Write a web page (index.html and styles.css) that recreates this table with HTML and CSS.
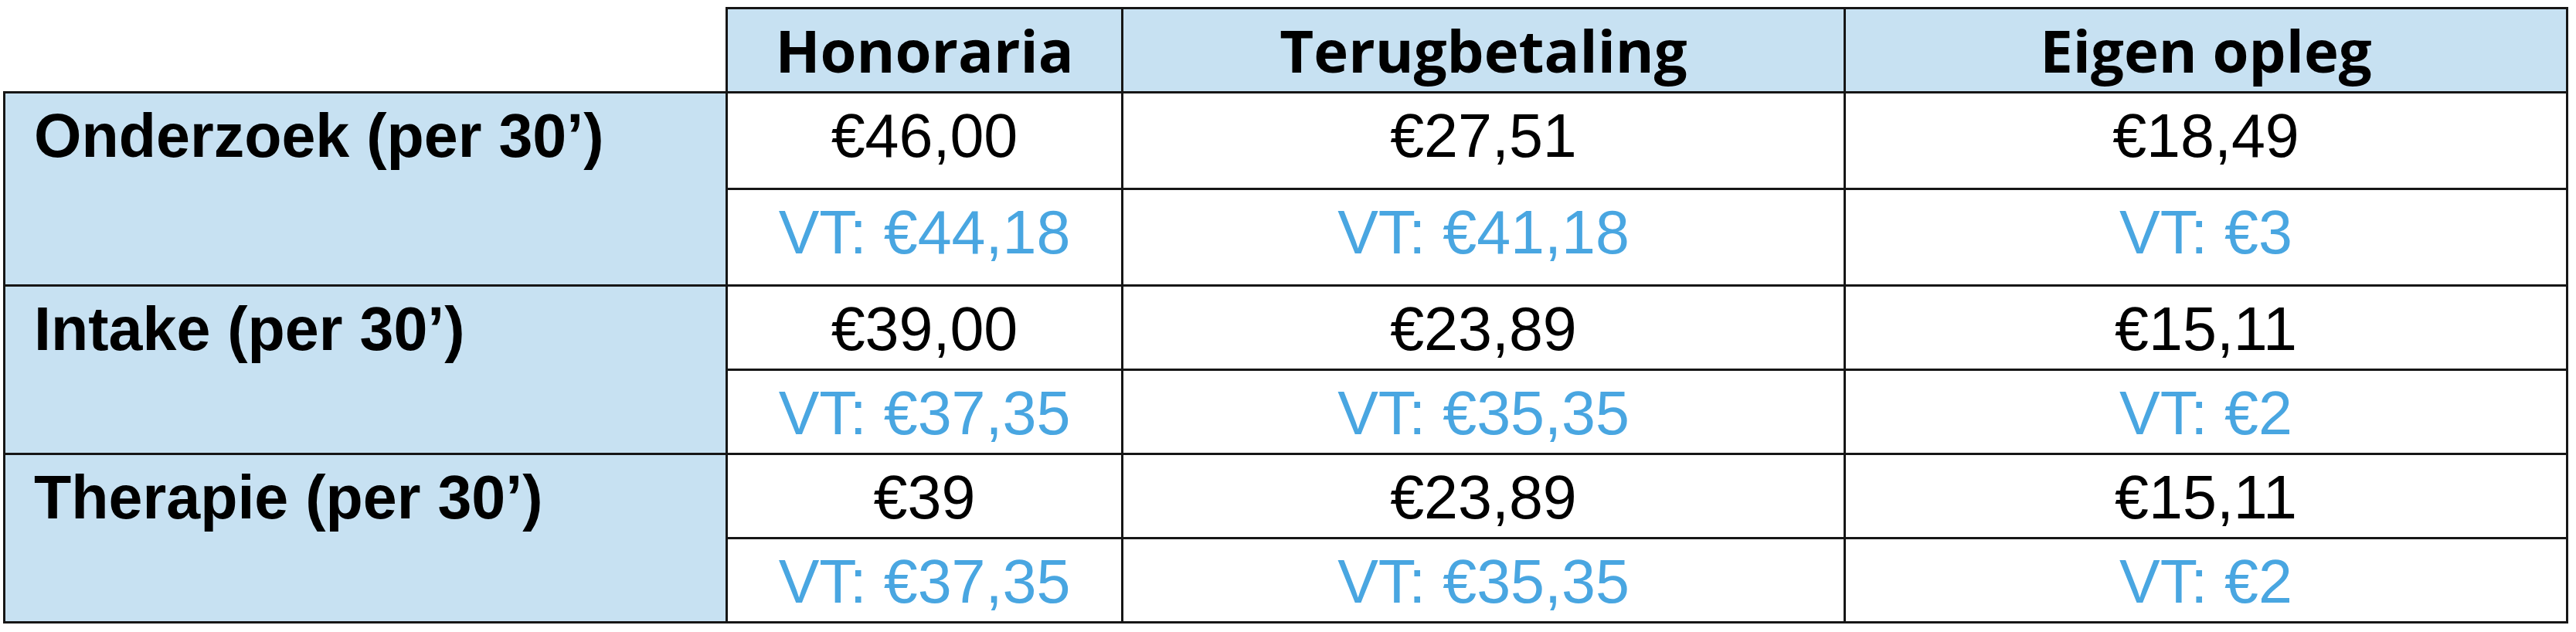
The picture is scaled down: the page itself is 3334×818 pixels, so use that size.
FILE: index.html
```html
<!DOCTYPE html>
<html lang="nl">
<head>
<meta charset="utf-8">
<title>Tarieven</title>
<link rel="stylesheet" href="styles.css">
</head>
<body>
<table class="tarief">
  <colgroup>
    <col class="c-label">
    <col class="c-hon">
    <col class="c-terug">
    <col class="c-eigen">
  </colgroup>
  <thead>
    <tr class="row-head">
      <td class="empty"></td>
      <th>Honoraria</th>
      <th>Terugbetaling</th>
      <th>Eigen opleg</th>
    </tr>
  </thead>
  <tbody>
    <tr class="row-tall">
      <th class="label" rowspan="2">Onderzoek (per 30’)</th>
      <td>€46,00</td>
      <td>€27,51</td>
      <td>€18,49</td>
    </tr>
    <tr class="row-tall">
      <td class="vt">VT: €44,18</td>
      <td class="vt">VT: €41,18</td>
      <td class="vt">VT: €3</td>
    </tr>
    <tr class="row">
      <th class="label" rowspan="2">Intake (per 30’)</th>
      <td>€39,00</td>
      <td>€23,89</td>
      <td>€15,11</td>
    </tr>
    <tr class="row">
      <td class="vt">VT: €37,35</td>
      <td class="vt">VT: €35,35</td>
      <td class="vt">VT: €2</td>
    </tr>
    <tr class="row">
      <th class="label" rowspan="2">Therapie (per 30’)</th>
      <td>€39</td>
      <td>€23,89</td>
      <td>€15,11</td>
    </tr>
    <tr class="row">
      <td class="vt">VT: €37,35</td>
      <td class="vt">VT: €35,35</td>
      <td class="vt">VT: €2</td>
    </tr>
  </tbody>
</table>
</body>
</html>
```

FILE: styles.css
```css
html, body {
  margin: 0;
  padding: 0;
  background: #ffffff;
}

body {
  padding: 9px 0 0 4px;
  font-family: "Liberation Sans", Arial, sans-serif;
  color: #000000;
}

.tarief {
  border-collapse: collapse;
  table-layout: fixed;
  width: 3318px;
}

.c-label { width: 935px; }
.c-hon { width: 512px; }
.c-terug { width: 935px; }
.c-eigen { width: 935px; }

.tarief td,
.tarief th {
  border: 3px solid #161616;
  vertical-align: top;
  padding: 10px 0 0 0;
  text-align: center;
  font-size: 79px;
  line-height: 90px;
  font-weight: normal;
  white-space: nowrap;
}

.tarief td.empty {
  border-top: none;
  border-left: none;
  background: #ffffff;
}

.row-head th {
  background: #c7e1f2;
  font-family: "Open Sans", "Liberation Sans", sans-serif;
  font-weight: 700;
  font-size: 76px;
  padding-top: 8px;
}

.row-head { height: 109px; }
.row-tall { height: 125px; }
.row { height: 109px; }

.tarief th.label {
  background: #c7e1f2;
  text-align: left;
  font-weight: 700;
  padding-left: 37px;
}

.tarief td.vt {
  color: #49a6e1;
}
```
